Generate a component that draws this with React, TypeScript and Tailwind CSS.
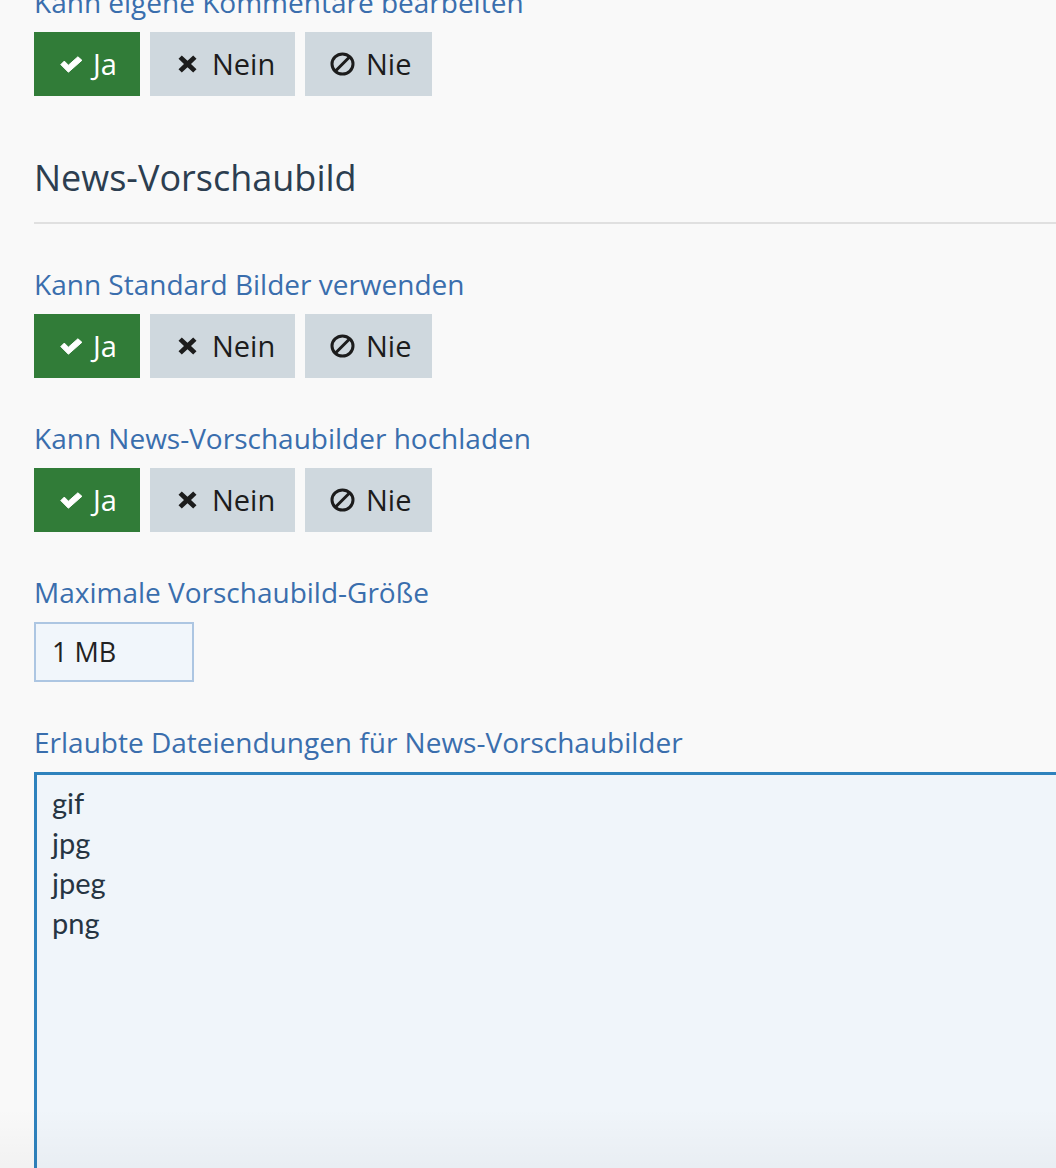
import React from "react";

const openSans = { fontFamily: '"Open Sans", "Noto Sans", sans-serif' };

function CheckIcon() {
    return (
        <svg viewBox="0 0 23 17" className="w-[23px] h-[17px]" fill="currentColor" stroke="currentColor" strokeWidth="1" strokeLinejoin="round">
            <path d="M0.8 8.6 L4.3 5.1 L8.4 9.2 L17.9 0.8 L21.9 4.3 L8.4 16.2 Z" />
        </svg>
    );
}

function TimesIcon() {
    return (
        <svg viewBox="0 0 19 18" className="w-[19px] h-[18px]" fill="currentColor">
            <path d="M0.5 3.8 L3.8 0.5 L9.5 5.8 L15.2 0.5 L18.5 3.8 L13 9 L18.5 14.2 L15.2 17.5 L9.5 12.2 L3.8 17.5 L0.5 14.2 L6 9 Z" />
        </svg>
    );
}

function BanIcon() {
    return (
        <svg viewBox="0 0 25 24" className="w-[25px] h-[24px]" fill="none" stroke="currentColor" strokeWidth="3">
            <ellipse cx="12.5" cy="12" rx="10.5" ry="10" />
            <line x1="19.5" y1="5" x2="5.5" y2="19" />
        </svg>
    );
}

function Choice() {
    return (
        <div className="flex gap-[10px]">
            <button className="w-[106px] h-16 bg-[#317c38] text-white flex items-center pl-[26px] gap-[10px] text-[29px]">
                <CheckIcon />
                <span>Ja</span>
            </button>
            <button className="w-[145px] h-16 bg-[#cfd8de] text-[#1c1c1c] flex items-center pl-[28px] gap-[15px] text-[29px]">
                <TimesIcon />
                <span>Nein</span>
            </button>
            <button className="w-[127px] h-16 bg-[#cfd8de] text-[#1c1c1c] flex items-center pl-[25px] gap-[11px] text-[29px]">
                <BanIcon />
                <span>Nie</span>
            </button>
        </div>
    );
}

function Label({ children }: { children: React.ReactNode }) {
    return <div className="text-[28px] leading-9 text-[#3a6ead] mb-3">{children}</div>;
}

export default function App() {
    return (
        <div className="h-[1168px] w-[1056px] overflow-hidden bg-[#f9f9f9] relative" style={openSans}>
            <div className="pl-[34px] w-[1120px] -mt-[16px]">
                <Label>Kann eigene Kommentare bearbeiten</Label>
                <Choice />

                <h2 className="text-[36px] leading-[44px] text-[#2c3e50] mt-[60px] pb-[22px] border-b-2 border-[#e0e0e0]">
                    News-Vorschaubild
                </h2>

                <div className="mt-[42px]">
                    <Label>Kann Standard Bilder verwenden</Label>
                    <Choice />
                </div>

                <div className="mt-[42px]">
                    <Label>Kann News-Vorschaubilder hochladen</Label>
                    <Choice />
                </div>

                <div className="mt-[42px]">
                    <Label>Maximale Vorschaubild-Größe</Label>
                    <div className="w-[160px] h-[60px] border-2 border-[#adc6e2] bg-[#f1f6fb] flex items-center px-4 text-[27px] text-[#222]">
                        1 MB
                    </div>
                </div>

                <div className="mt-[42px]">
                    <Label>Erlaubte Dateiendungen für News-Vorschaubilder</Label>
                    <div
                        className="h-[500px] border-[3px] border-[#2e82bd] bg-[#f0f5fa] pl-[15px] pt-[8px] text-[29px] leading-10 text-[#263442]"
                        style={{ fontFamily: 'Lato, "Open Sans", sans-serif' }}
                    >
                        <div>gif</div>
                        <div>jpg</div>
                        <div>jpeg</div>
                        <div>png</div>
                    </div>
                </div>
            </div>
            <div className="absolute left-0 right-0 bottom-0 h-[60px] bg-gradient-to-b from-transparent to-[#000000]/[0.03] pointer-events-none" />
        </div>
    );
}
